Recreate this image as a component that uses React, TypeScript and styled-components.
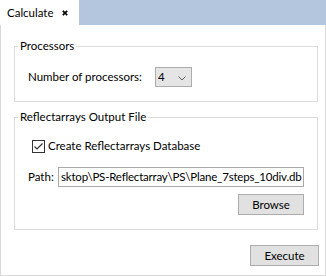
import React from "react";
import styled, { createGlobalStyle } from "styled-components";

const GlobalStyle = createGlobalStyle`
  html, body { margin: 0; padding: 0; background: #ffffff; }
  body { font-family: Lato, "Noto Sans", "Liberation Sans", sans-serif; font-size: 11.5px; color: #000; }
  * { box-sizing: border-box; }
`;

const Window = styled.div`
  width: 326px;
  height: 276px;
  display: flex;
  flex-direction: column;
  background: #ffffff;
`;

const TabStrip = styled.div`
  height: 25px;
  display: flex;
  background: #b3c6de;
`;

const Tab = styled.div`
  width: 79px;
  background: #ffffff;
  display: flex;
  align-items: center;
  padding-left: 7px;
  line-height: 16px;
`;

const TabTitle = styled.span`
  width: 55px;
  flex: none;
`;

const CloseIcon = styled.svg`
  width: 6px;
  height: 6px;
  margin-top: 1px;
`;

const Panel = styled.div`
  flex: 1;
  border: 1px solid #d9d9d9;
  border-top: none;
  padding: 13px 7px 0 13px;
  display: flex;
  flex-direction: column;
`;

const Group = styled.fieldset<{ $gapTop?: number }>`
  margin: ${(p) => p.$gapTop ?? 0}px 0 0 0;
  padding: 0;
  border: 1px solid #dcdcdc;
  min-width: 0;
`;

const Legend = styled.legend`
  margin-left: 3px;
  padding: 0 2px;
  line-height: 16px;
  font-size: 11.5px;
`;

const GroupBody = styled.div<{ $pt: number; $pb: number }>`
  padding: ${(p) => p.$pt}px 13px ${(p) => p.$pb}px 13px;
  display: flex;
  flex-direction: column;
`;

const Row = styled.div<{ $mt?: number; $justify?: string }>`
  display: flex;
  align-items: center;
  justify-content: ${(p) => p.$justify ?? "flex-start"};
  margin-top: ${(p) => p.$mt ?? 0}px;
`;

const Label = styled.span<{ $width?: number }>`
  width: ${(p) => (p.$width ? `${p.$width}px` : "auto")};
  flex: none;
  line-height: 16px;
  white-space: nowrap;
`;

const Select = styled.div`
  width: 37px;
  height: 20px;
  flex: none;
  background: #e5e5e5;
  border: 1px solid #acacac;
  display: flex;
  align-items: center;
  justify-content: space-between;
  padding: 0 5px 0 2px;
  line-height: 16px;
`;

const Chevron = styled.svg`
  width: 8px;
  height: 5px;
  margin-top: 2px;
`;

const CheckBox = styled.span`
  width: 13px;
  height: 13px;
  border: 1px solid #333333;
  background: #ffffff;
  margin-left: 4px;
  margin-right: 3px;
  display: flex;
  align-items: center;
  justify-content: center;
  flex: none;
`;

const TextBox = styled.div`
  width: 246px;
  height: 20px;
  flex: none;
  border: 1px solid #a9a9a9;
  background: #ffffff;
  overflow: hidden;
  display: flex;
  justify-content: flex-start;
  align-items: center;
  padding: 0 1px 0 2px;
  white-space: nowrap;
  letter-spacing: -0.2px;
  line-height: 16px;
`;

const Button = styled.button<{ $w: number }>`
  width: ${(p) => p.$w}px;
  height: 21px;
  background: #e1e1e1;
  border: 1px solid #adadad;
  border-radius: 0;
  font-family: inherit;
  font-size: 11.5px;
  color: #000;
  padding: 0;
  line-height: 16px;
`;

const Footer = styled.div`
  display: flex;
  justify-content: flex-end;
  margin-top: 15px;
  margin-right: -1px;
`;

export default function App() {
  return (
    <>
      <GlobalStyle />
      <Window>
        <TabStrip>
          <Tab>
            <TabTitle>Calculate</TabTitle>
            <CloseIcon viewBox="0 0 6 6">
              <path d="M0.8 0.8 L5.2 5.2 M5.2 0.8 L0.8 5.2" stroke="#000" strokeWidth="1.7" />
            </CloseIcon>
          </Tab>
        </TabStrip>
        <Panel>
          <Group>
            <Legend>Processors</Legend>
            <GroupBody $pt={13} $pb={14}>
              <Row>
                <Label $width={127}>Number of processors:</Label>
                <Select>
                  <span>4</span>
                  <Chevron viewBox="0 0 8 5">
                    <polyline points="0.5,0.5 4,4 7.5,0.5" fill="none" stroke="#606060" strokeWidth="1" />
                  </Chevron>
                </Select>
              </Row>
            </GroupBody>
          </Group>
          <Group $gapTop={7}>
            <Legend>Reflectarrays Output File</Legend>
            <GroupBody $pt={13} $pb={14}>
              <Row>
                <CheckBox>
                  <svg width="11" height="11" viewBox="0 0 11 11">
                    <polyline points="1.5,5.5 4,8 9.5,2.5" fill="none" stroke="#333" strokeWidth="1.2" />
                  </svg>
                </CheckBox>
                <Label>Create Reflectarrays Database</Label>
              </Row>
              <Row $mt={13}>
                <Label $width={30}>Path:</Label>
                <TextBox>sktop\PS-Reflectarray\PS\Plane_7steps_10div.db</TextBox>
              </Row>
              <Row $mt={7} $justify="flex-end">
                <Button $w={66}>Browse</Button>
              </Row>
            </GroupBody>
          </Group>
          <Footer>
            <Button $w={69}>Execute</Button>
          </Footer>
        </Panel>
      </Window>
    </>
  );
}
